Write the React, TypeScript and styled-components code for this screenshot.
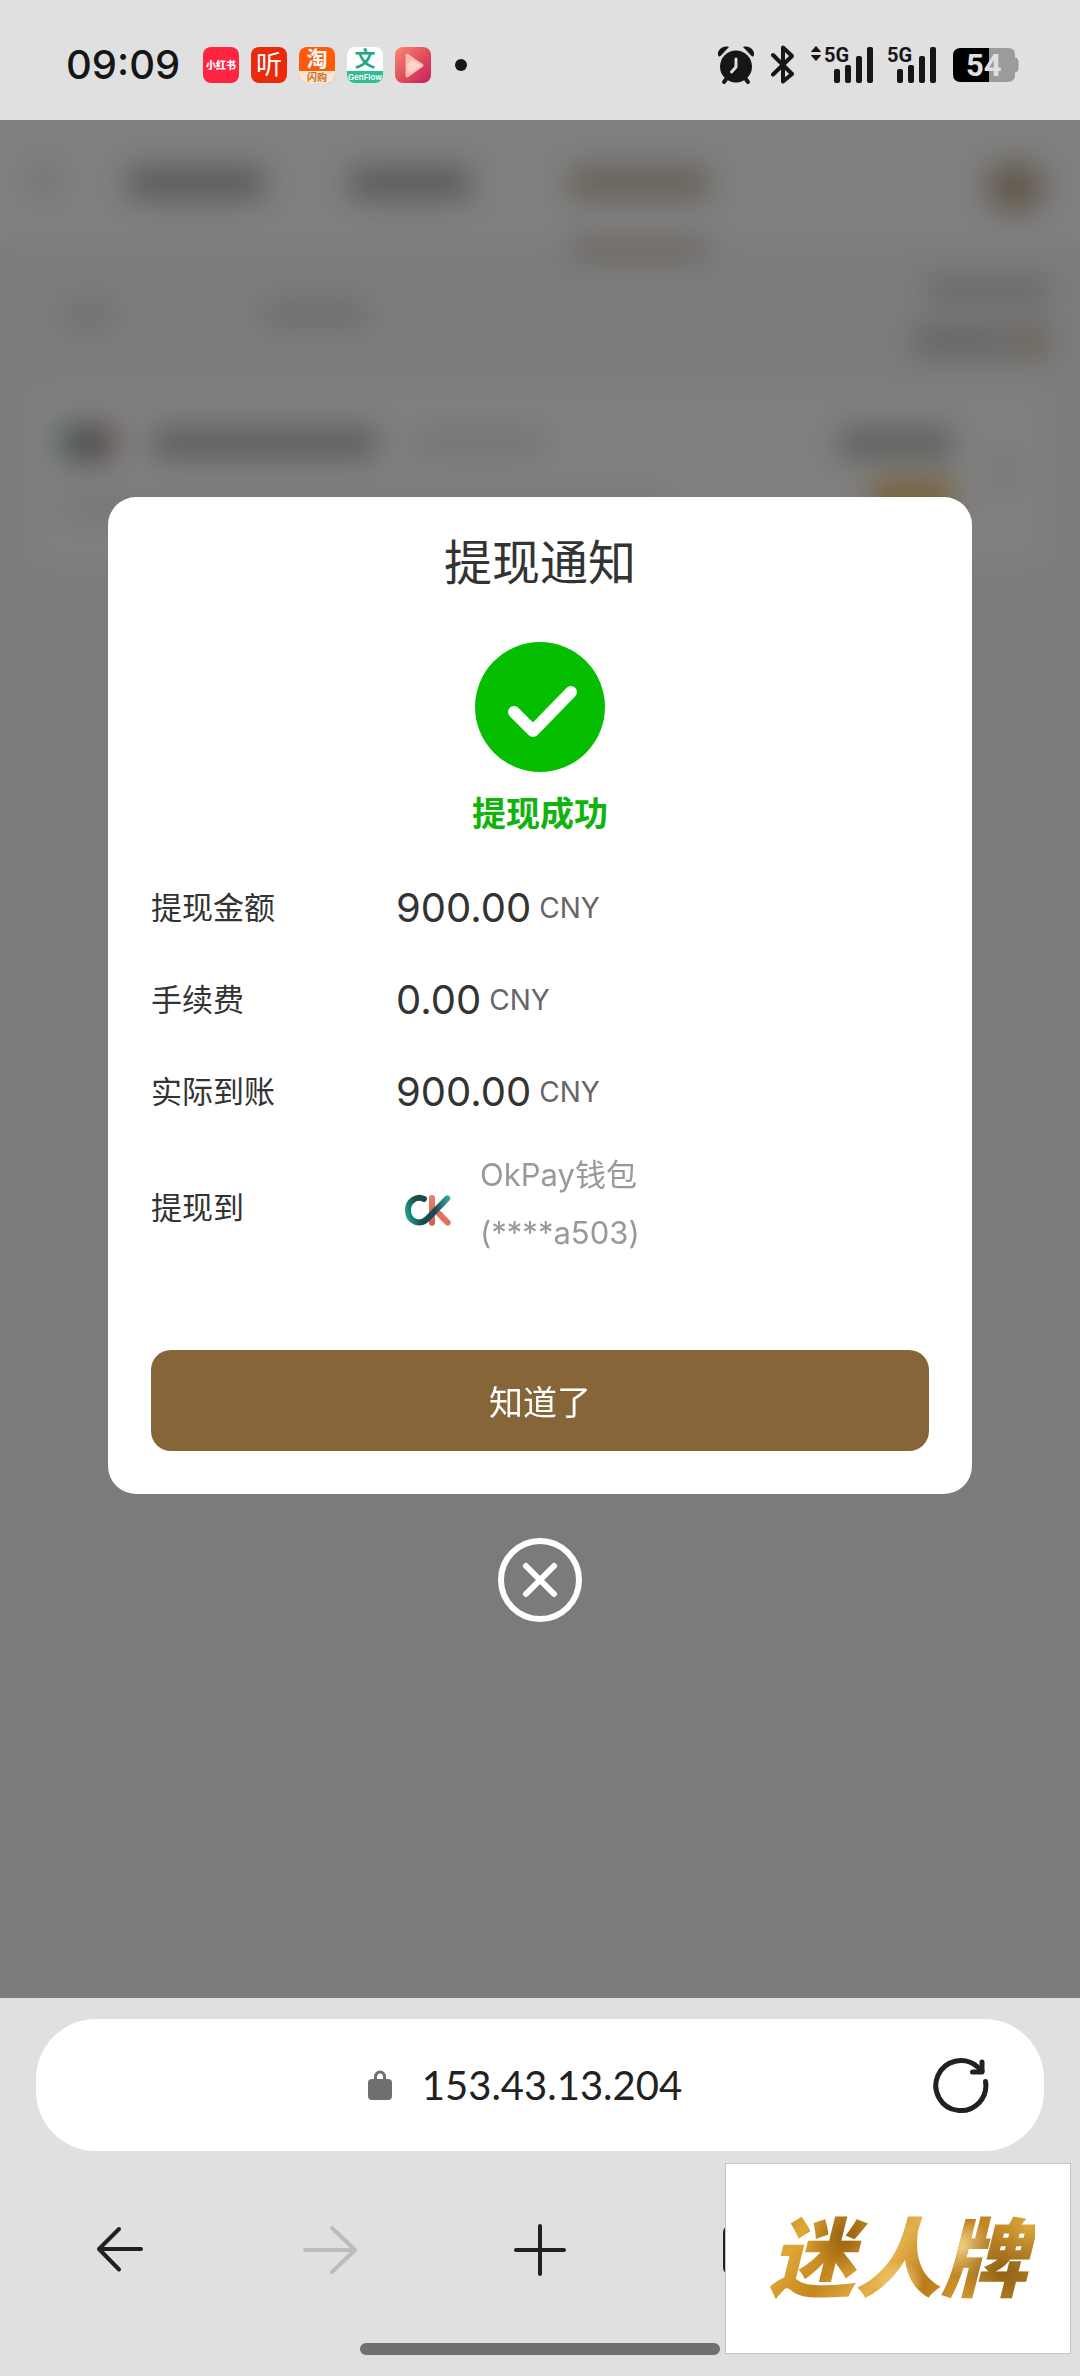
import React from 'react';
import styled, { createGlobalStyle } from 'styled-components';

const palette = {
  chrome: '#e0e0e0',
  ink: '#161616',
  nav: '#212121',
  text: '#333333',
  unit: '#666666',
  muted: '#999999',
  brand: '#866538',
  success: '#05be00',
};

const GlobalStyle = createGlobalStyle`
  * {
    box-sizing: border-box;
  }
  body {
    margin: 0;
    font-family: Inter, 'Noto Sans CJK SC', sans-serif;
    color: ${palette.text};
    background: ${palette.chrome};
  }
  button, input {
    font-family: inherit;
    border: 0;
    padding: 0;
    background: none;
  }
  svg {
    display: block;
  }
`;

type SignalProps = { active?: boolean };

function Signal({ active }: SignalProps) {
  return (
    <svg width="62" height="48" viewBox="0 -4 62 48" fill={palette.ink}>
      {active && (
        <>
          <path d="M5 1.5l4.500 5H0.500z" stroke={palette.ink} strokeLinejoin="round" />
          <path d="M5 15.500l4.500-5H0.500z" stroke={palette.ink} strokeLinejoin="round" />
        </>
      )}
      <text x="13" y="17" fontFamily="Roboto, sans-serif" fontWeight="700" fontSize="20">
        5G
      </text>
      <rect x="23" y="24" width="6" height="14" rx="2" />
      <rect x="34" y="20" width="6" height="18" rx="2" />
      <rect x="45" y="11" width="6" height="27" rx="2" />
      <rect x="56" y="2" width="6" height="36" rx="2" />
    </svg>
  );
}

function AlarmIcon() {
  return (
    <svg width="38" height="40" viewBox="0 0 38 40">
      <g stroke={palette.ink} strokeWidth="4" strokeLinecap="round">
        <path d="M10 33l-3 4M28 33l3 4" />
      </g>
      <path
        d="M1 10C0 5 6 0 12 2L3 11.500Q1.500 12 1 10zM37 10C38 5 32 0 26 2l9 9.500q1.500.5 2-1.500z"
        fill={palette.ink}
      />
      <circle cx="19" cy="21.500" r="16" fill={palette.ink} />
      <path
        d="M19 14v8l-4.500 5"
        fill="none"
        stroke={palette.chrome}
        strokeWidth="3"
        strokeLinecap="round"
        strokeLinejoin="round"
      />
    </svg>
  );
}

function BluetoothIcon() {
  return (
    <svg width="24" height="40" viewBox="0 0 24 40">
      <path
        d="M2 10l19 19-9 7.500v-34L21 11 2 29.500"
        fill="none"
        stroke={palette.ink}
        strokeWidth="4"
        strokeLinecap="round"
        strokeLinejoin="round"
      />
    </svg>
  );
}

function BatteryIcon() {
  return (
    <svg width="68" height="40" viewBox="0 0 68 40">
      <path
        d="M9 3h47q7 0 7 7v2.500q3.500.5 3.500 3.500v8q0 3-3.500 3.500V30q0 7-7 7H9q-8 0-8-8V11q0-8 8-8z"
        fill="#9b9b9b"
      />
      <path d="M37 3v34H9q-8 0-8-8V11q0-8 8-8z" fill="#000" />
      <text x="14" y="31" fontFamily="Roboto, sans-serif" fontWeight="700" fontSize="31" fill={palette.chrome}>
        54
      </text>
    </svg>
  );
}

function PlayAppIcon() {
  return (
    <svg width="36" height="36" viewBox="0 0 36 36">
      <defs>
        <linearGradient id="play-bg" x1="0" y1="0" x2="1" y2="1">
          <stop offset="0" stopColor="#f58a75" />
          <stop offset=".5" stopColor="#e0505a" />
          <stop offset="1" stopColor="#c41f5c" />
        </linearGradient>
      </defs>
      <rect width="36" height="36" rx="8" fill="url(#play-bg)" />
      <path d="M12 8l15 10.500L12 29z" fill="#fbb9b0" stroke="#fbb9b0" strokeWidth="3" strokeLinejoin="round" />
      <path d="M11 19l6-6 10 5.500-12 8z" fill="#fdd3cb" />
    </svg>
  );
}

function WalletLogo() {
  return (
    <svg width="64" height="64" viewBox="18 6 192 192" fill="none" strokeWidth="18" strokeLinecap="round">
      <defs>
        <linearGradient id="ok-c" gradientUnits="userSpaceOnUse" x1="45" y1="120" x2="182" y2="80">
          <stop offset="0" stopColor="#1fa08f" />
          <stop offset=".25" stopColor="#17504f" />
          <stop offset=".6" stopColor="#1a4658" />
          <stop offset="1" stopColor="#3bb49c" />
        </linearGradient>
        <linearGradient id="ok-k" x1="0" y1="0" x2="0" y2="1">
          <stop offset="0" stopColor="#e98270" />
          <stop offset="1" stopColor="#d65d4e" />
        </linearGradient>
      </defs>
      <path d="M146 130l27 28" stroke="#e0705f" />
      <rect x="117" y="75" width="18" height="92" rx="8" fill="url(#ok-k)" />
      <path d="M102 87C80 76 54 93 54 120c0 35 35 48 57 27l61-62" stroke="url(#ok-c)" />
    </svg>
  );
}

type NavIconProps = { d: string; color?: string };

function NavIcon({ d, color = palette.nav }: NavIconProps) {
  return (
    <svg width="60" height="60" viewBox="0 0 60 60" fill="none">
      <path d={d} stroke={color} strokeWidth="4" strokeLinecap="round" strokeLinejoin="round" />
    </svg>
  );
}

const amounts = [
  { label: '提现金额', value: '900.00' },
  { label: '手续费', value: '0.00' },
  { label: '实际到账', value: '900.00' },
];

function RecordsPage() {
  return (
    <Records aria-hidden="true">
      <RecordsHeader>
        <Smudge $w={14} $h={24} $color="#cccccc" />
        <Smudge $w={136} $h={30} $color="#b0b0b0" />
        <Smudge $w={120} $h={30} $color="#b0b0b0" />
        <ActiveTab>
          <Smudge $w={138} $h={30} $color="#c9bda9" />
          <Smudge $w={138} $h={12} $color="#c0ad98" />
        </ActiveTab>
        <Smudge $w={58} $h={50} $color="#c0ae92" $round />
      </RecordsHeader>
      <Filters>
        <Pill>
          <Smudge $w={50} $h={22} $color="#dadada" />
          <Smudge $w={12} $h={12} $color="#d8d8d8" />
        </Pill>
        <Pill>
          <Smudge $w={104} $h={22} $color="#d4d4d4" />
          <Smudge $w={12} $h={12} $color="#d8d8d8" />
        </Pill>
        <Totals>
          <Smudge $w={120} $h={24} $color="#cfcfcf" />
          <TotalLine>
            <Smudge $w={92} $h={24} $color="#c0c0c0" />
            <Smudge $w={36} $h={30} $color="#d3c6b0" />
          </TotalLine>
        </Totals>
      </Filters>
      <RecordCard>
        <RecordMain>
          <RecordTitle>
            <TinyLogo />
            <Smudge $w={222} $h={28} $color="#b4b4b4" />
            <Smudge $w={126} $h={20} $color="#e2e2e2" />
          </RecordTitle>
          <Smudge $w={600} $h={16} $color="#e4e4e4" />
        </RecordMain>
        <RecordSide>
          <Smudge $w={112} $h={28} $color="#b8b8b8" />
          <Smudge $w={80} $h={32} $color="#ecbc68" />
        </RecordSide>
        <Smudge $w={12} $h={24} $color="#d2d2d2" />
      </RecordCard>
    </Records>
  );
}

function App() {
  return (
    <>
      <GlobalStyle />
      <Screen>
        <StatusBar>
          <Clock>09:09</Clock>
          <AppIcons>
            <AppIcon $bg="#ff2442" $size={10}>
              小红书
            </AppIcon>
            <AppIcon $bg="#eb2a0c" $size={26}>
              听
            </AppIcon>
            <TaobaoIcon>
              <span>淘</span>
              <small>闪购</small>
            </TaobaoIcon>
            <GenFlowIcon>
              <span>文</span>
              <small>GenFlow</small>
            </GenFlowIcon>
            <PlayAppIcon />
          </AppIcons>
          <MoreDot />
          <SystemIcons>
            <AlarmIcon />
            <BluetoothIcon />
            <Signal active />
            <Signal />
            <BatteryIcon />
          </SystemIcons>
        </StatusBar>

        <Viewport>
          <RecordsPage />
          <Overlay>
            <Modal role="dialog" aria-labelledby="notice-title">
              <Title id="notice-title">提现通知</Title>
              <Result>
                <svg width="130" height="130" viewBox="0 0 130 130">
                  <circle cx="65" cy="65" r="65" fill={palette.success} />
                  <path
                    d="M39 70l19 19 38-39"
                    fill="none"
                    stroke="#fff"
                    strokeWidth="12"
                    strokeLinecap="round"
                    strokeLinejoin="round"
                  />
                </svg>
                <strong>提现成功</strong>
              </Result>
              <Details>
                {amounts.map(({ label, value }) => (
                  <Row key={label}>
                    <dt>{label}</dt>
                    <Amount>
                      {value}
                      <small>CNY</small>
                    </Amount>
                  </Row>
                ))}
                <Row $tall>
                  <dt>提现到</dt>
                  <Wallet>
                    <WalletLogo />
                    <span>
                      OkPay钱包
                      <br />
                      (****a503)
                    </span>
                  </Wallet>
                </Row>
              </Details>
              <ConfirmButton type="button">知道了</ConfirmButton>
            </Modal>
            <CloseButton type="button" aria-label="关闭">
              <svg width="84" height="84" viewBox="0 0 84 84" fill="none" stroke="#fff">
                <circle cx="42" cy="42" r="39" strokeWidth="6" />
                <path d="M28 28l28 28M56 28L28 56" strokeWidth="6" strokeLinecap="round" />
              </svg>
            </CloseButton>
          </Overlay>
        </Viewport>

        <BrowserBar>
          <AddressBar>
            <Address href="#">
              <svg width="24" height="30" viewBox="0 0 24 30">
                <rect y="9" width="24" height="21" rx="4" fill="#707070" />
                <path d="M7.500 11V6.500a4.500 4.500 0 0 1 9 0V11" fill="none" stroke="#707070" strokeWidth="3" />
              </svg>
              153.43.13.204
            </Address>
            <ReloadButton type="button" aria-label="刷新">
              <svg
                width="60"
                height="60"
                viewBox="0 0 60 60"
                fill="none"
                stroke={palette.nav}
                strokeWidth="5"
                strokeLinecap="round"
                strokeLinejoin="round"
              >
                <path d="M55.500 26.500A25 25 0 1 1 47 11.500L52 16" />
                <path d="M52 7v10H42.500" />
              </svg>
            </ReloadButton>
          </AddressBar>
          <NavBar>
            <button type="button" aria-label="后退">
              <NavIcon d="M29 9L9 29l20 20.500M9 29h42" />
            </button>
            <button type="button" aria-label="前进" disabled>
              <NavIcon d="M32 8l23 22-23 22M55 30H5" color="#bcbcbc" />
            </button>
            <button type="button" aria-label="新建标签页">
              <NavIcon d="M30 6v48M6 30h48" />
            </button>
            <button type="button" aria-label="标签页">
              <NavIcon d="M10 8h40q5 0 5 5v34q0 5-5 5H10q-5 0-5-5V13q0-5 5-5z" />
            </button>
            <button type="button" aria-label="菜单">
              <NavIcon d="M8 14h44M8 30h44M8 46h44" />
            </button>
          </NavBar>
          <HomeIndicator />
          <Watermark>
            <span>迷人牌</span>
          </Watermark>
        </BrowserBar>
      </Screen>
    </>
  );
}

const Screen = styled.div`
  display: flex;
  flex-direction: column;
  min-height: 100vh;
`;

const StatusBar = styled.header`
  display: flex;
  align-items: center;
  height: 120px;
  padding: 10px 60px 0 66px;
  color: ${palette.ink};
`;

const Clock = styled.time`
  font-size: 40px;
  font-weight: 500;
  line-height: 48px;
  width: 137px;
`;

const AppIcons = styled.div`
  display: flex;
  gap: 12px;
`;

const AppIcon = styled.div<{ $bg: string; $size: number }>`
  display: flex;
  align-items: center;
  justify-content: center;
  width: 36px;
  height: 36px;
  border-radius: 8px;
  white-space: nowrap;
  color: #fff;
  background: ${({ $bg }) => $bg};
  font-size: ${({ $size }) => $size}px;
  font-weight: ${({ $size }) => ($size > 20 ? 400 : 900)};
  line-height: 1;
`;

const StackedIcon = styled.div`
  display: flex;
  flex-direction: column;
  align-items: center;
  width: 36px;
  height: 36px;
  border-radius: 8px;
  span {
    font-size: 21px;
    font-weight: 700;
    line-height: 24px;
  }
  small {
    align-self: stretch;
    text-align: center;
    line-height: 12px;
    border-radius: 0 0 8px 8px;
  }
`;

const TaobaoIcon = styled(StackedIcon)`
  background: #ff5a0a;
  color: #fff;
  small {
    font-size: 10px;
    font-weight: 700;
    color: #c8702c;
    background: #fde6cf;
  }
`;

const GenFlowIcon = styled(StackedIcon)`
  background: #fff;
  color: #1fa883;
  small {
    font-size: 8px;
    font-weight: 600;
    color: #fff;
    background: #2fbd93;
  }
`;

const MoreDot = styled.i`
  width: 12px;
  height: 12px;
  margin-left: 24px;
  border-radius: 50%;
  background: ${palette.ink};
`;

const SystemIcons = styled.div`
  display: flex;
  align-items: center;
  gap: 16px;
  margin-left: auto;
  svg:nth-child(4) {
    margin-left: -15px;
  }
`;

const Viewport = styled.main`
  position: relative;
  flex: 1;
  display: flex;
  background: #f7f7f7;
`;

/* page underneath the notice, only ever seen out of focus */
const Records = styled.div`
  flex: 1;
`;

const Smudge = styled.i<{ $w: number; $h: number; $color: string; $round?: boolean }>`
  display: block;
  flex: none;
  width: ${({ $w }) => $w}px;
  height: ${({ $h }) => $h}px;
  border-radius: ${({ $round }) => ($round ? '50%' : '4px')};
  background: ${({ $color }) => $color};
`;

const RecordsHeader = styled.div`
  display: flex;
  align-items: flex-start;
  height: 128px;
  padding: 48px 36px 0 38px;
  background: #fff;
  > i:nth-child(2) {
    margin-left: 76px;
  }
  > i:nth-child(3) {
    margin: 0 6px 0 86px;
  }
  > i:last-child {
    margin: -6px 0 0 auto;
  }
`;

const ActiveTab = styled.div`
  display: grid;
  gap: 44px;
  margin-left: 94px;
`;

const Filters = styled.div`
  display: flex;
  gap: 20px;
  height: 136px;
  padding: 30px 32px 0 40px;
`;

const Pill = styled.div`
  display: flex;
  align-items: center;
  gap: 50px;
  height: 72px;
  padding: 0 24px;
  border-radius: 36px;
  background: #f9f9f9;
  & + & {
    margin-left: 20px;
  }
`;

const Totals = styled.div`
  display: grid;
  justify-items: end;
  align-content: start;
  gap: 24px;
  margin-left: auto;
`;

const TotalLine = styled.div`
  display: flex;
  align-items: center;
  gap: 6px;
`;

const RecordCard = styled.div`
  display: flex;
  align-items: center;
  height: 184px;
  margin: 0 28px;
  padding: 0 42px 10px 34px;
  border-radius: 20px;
  background: #fff;
`;

const RecordMain = styled.div`
  display: grid;
  gap: 40px;
`;

const RecordTitle = styled.div`
  display: flex;
  align-items: center;
  gap: 40px;
`;

const TinyLogo = styled.i`
  width: 52px;
  height: 32px;
  background: linear-gradient(90deg, #7fb5ad, #85898d 55%, #d09080);
`;

const RecordSide = styled.div`
  display: grid;
  justify-items: end;
  gap: 24px;
  margin: 0 46px 0 auto;
`;

const Overlay = styled.div`
  position: absolute;
  inset: 0;
  display: flex;
  flex-direction: column;
  align-items: center;
  justify-content: center;
  gap: 44px;
  background: rgba(0, 0, 0, 0.5);
  backdrop-filter: blur(15px);
`;

const Modal = styled.section`
  width: 80%;
  padding: 30px 43px 43px;
  border-radius: 28px;
  background: #fff;
`;

const Title = styled.h1`
  margin: 0;
  font-size: 48px;
  font-weight: 400;
  line-height: 72px;
  text-align: center;
`;

const Result = styled.div`
  display: flex;
  flex-direction: column;
  align-items: center;
  gap: 18px;
  margin-top: 43px;
  strong {
    font-size: 34px;
    line-height: 48px;
    color: #10b40c;
  }
`;

const Details = styled.dl`
  margin: 24px 0 80px;
`;

const Row = styled.div<{ $tall?: boolean }>`
  display: grid;
  grid-template-columns: 245px 1fr;
  align-items: center;
  height: ${({ $tall }) => ($tall ? 132 : 92)}px;
  dt {
    padding: ${({ $tall }) => ($tall ? '4px 0 0' : '0 0 4px')};
    font-size: 31px;
  }
  dd {
    margin: 0;
  }
`;

const Amount = styled.dd`
  display: flex;
  align-items: center;
  gap: 8px;
  font-size: 40px;
  line-height: 48px;
  small {
    font-size: 28px;
    color: ${palette.unit};
  }
`;

const Wallet = styled.dd`
  display: flex;
  align-items: center;
  gap: 20px;
  font-size: 31px;
  line-height: 58px;
  color: ${palette.muted};
`;

const ConfirmButton = styled.button`
  display: block;
  width: 100%;
  height: 101px;
  border-radius: 20px;
  font-size: 34px;
  color: #fff;
  background: ${palette.brand};
`;

const CloseButton = styled.button`
  border-radius: 50%;
`;

const BrowserBar = styled.footer`
  position: relative;
  display: flex;
  flex-direction: column;
  align-items: center;
  padding: 21px 0;
  background: ${palette.chrome};
`;

const AddressBar = styled.div`
  display: grid;
  grid-template-columns: 60px 1fr 60px;
  align-items: center;
  align-self: stretch;
  height: 132px;
  margin: 0 36px;
  padding: 0 54px;
  border-radius: 60px;
  background: #fff;
`;

const Address = styled.a`
  grid-column: 2;
  display: flex;
  align-items: center;
  justify-content: center;
  gap: 30px;
  margin-right: 30px;
  font-family: Lato, sans-serif;
  font-size: 40px;
  color: ${palette.nav};
  text-decoration: none;
`;

const ReloadButton = styled.button`
  width: 60px;
  height: 60px;
`;

const NavBar = styled.nav`
  display: flex;
  justify-content: space-around;
  align-items: center;
  align-self: stretch;
  height: 192px;
  padding: 6px 15px 0;
`;

const HomeIndicator = styled.div`
  width: 33.333%;
  height: 12px;
  border-radius: 6px;
  background: #707070;
`;

const Watermark = styled.div`
  position: absolute;
  right: 9px;
  bottom: 22px;
  display: flex;
  align-items: center;
  justify-content: center;
  width: 346px;
  height: 191px;
  border: 1px solid #c4c4c4;
  background: #fff;
  span {
    padding: 0 8px;
    font-size: 86px;
    font-style: italic;
    font-weight: 900;
    line-height: 120px;
    color: transparent;
    background:
      radial-gradient(circle at 30% 30%, rgba(120, 70, 5, 0.6), transparent 18%),
      radial-gradient(circle at 50% 72%, rgba(250, 222, 140, 0.9), transparent 16%),
      radial-gradient(circle at 88% 60%, rgba(110, 66, 6, 0.7), transparent 20%),
      radial-gradient(circle at 74% 40%, rgba(252, 226, 150, 0.9), transparent 14%),
      linear-gradient(125deg, #b87c1a, #e0a836 18%, #c4861e 32%, #e4b04a 48%, #b97a18 62%, #dca63a 80%, #a86c12);
    background-clip: text;
  }
`;

export default App;
